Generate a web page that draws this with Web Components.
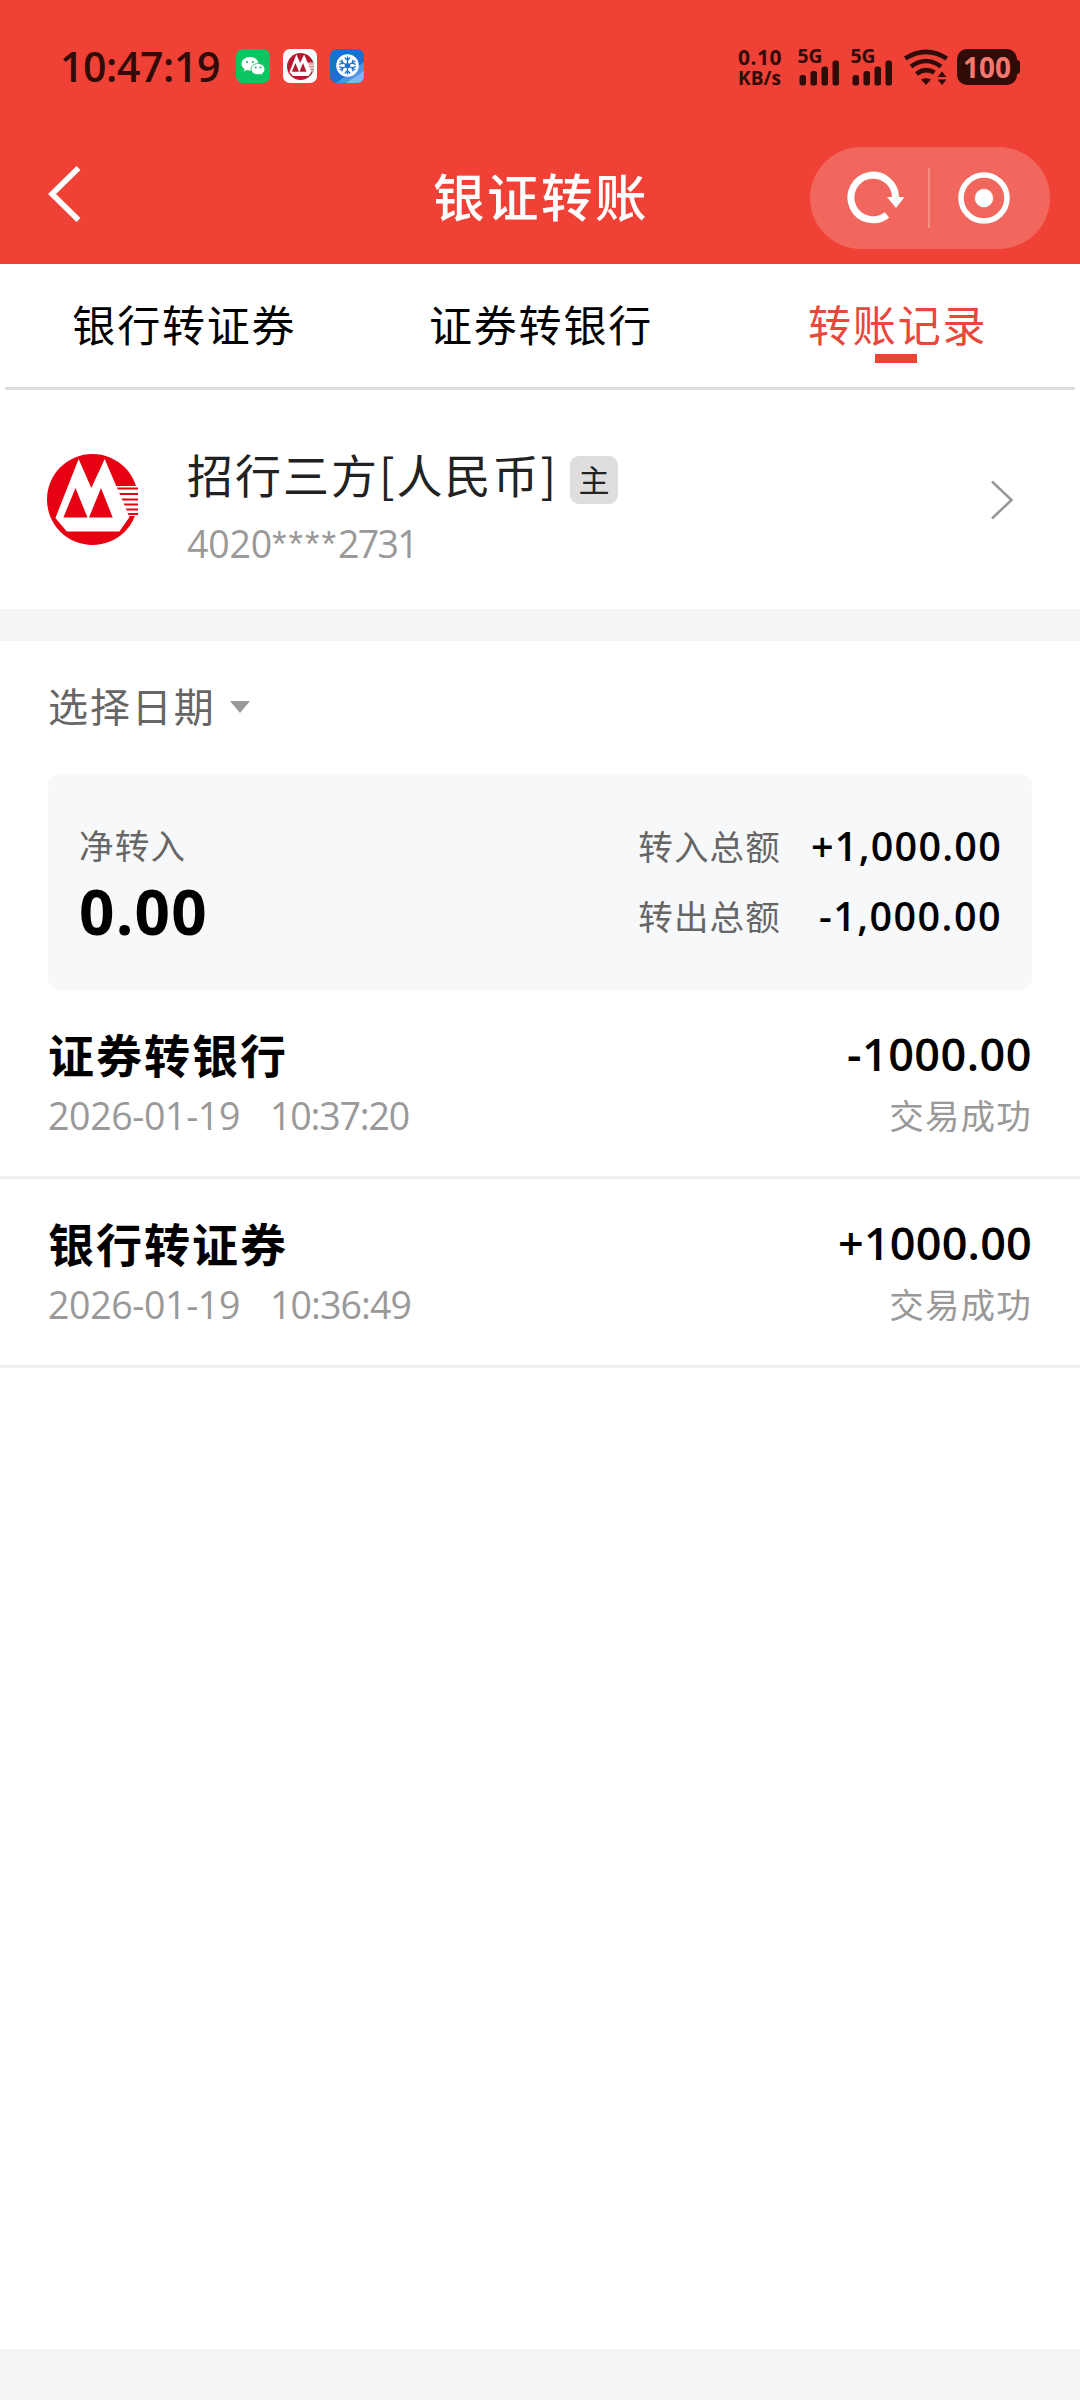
<!doctype html>
<html lang="zh-CN">
  <head>
    <meta charset="UTF-8" />
    <meta name="viewport" content="width=device-width, initial-scale=1.0" />
    <title>银证转账</title>
    <style>
      body {
        margin: 0;
        background: #fff;
        --num: "Open Sans", "Noto Sans", "Noto Sans CJK SC", sans-serif;
        font-family: "Noto Sans CJK SC", "Noto Sans", sans-serif;
      }
      .mask { font-family: "Liberation Sans", sans-serif; }
    </style>
  </head>
<body>

<transfer-page>
  <status-bar slot="top" time="10:47:19" battery="100"></status-bar>
  <nav-header slot="top">银证转账</nav-header>
  <tab-bar>
    <tab-item>银行转证券</tab-item>
    <tab-item>证券转银行</tab-item>
    <tab-item active>转账记录</tab-item>
  </tab-bar>
  <account-card badge="主">
    招行三方[人民币]
    <fit-text slot="number" width="85">4020</fit-text><fit-text slot="number" class="mask" width="66">****</fit-text><fit-text slot="number" width="79">2731</fit-text>
  </account-card>
  <date-filter>选择日期</date-filter>
  <summary-card net="0.00" in="+1,000.00" out="-1,000.00"></summary-card>
  <record-row date="2026-01-19" time="10:37:20" amount="-1000.00" amount-width="185" time-width="139" status="交易成功">证券转银行</record-row>
  <record-row date="2026-01-19" time="10:36:49" amount="+1000.00" amount-width="194" time-width="141" status="交易成功">银行转证券</record-row>
</transfer-page>

<script>

  function define(name, html, setup) {
    customElements.define(name, class extends HTMLElement {
      constructor() {
        super();
        this.attachShadow({ mode: 'open' });
      }
      connectedCallback() {
        this.shadowRoot.innerHTML = typeof html === 'function' ? html(this) : html;
        if (setup) setup(this);
      }
    });
  }

  // one line of text, spaced out or in so that it takes the given width
  define('fit-text', `
    <style>
      :host { display: inline-block; white-space: nowrap; }
    </style>
    <span><slot></slot></span>
  `, (el) => {
    const span = el.shadowRoot.querySelector('span');
    const natural = span.getBoundingClientRect().width;
    const wanted = Number(el.getAttribute('width'));
    const step = (wanted - natural) / el.textContent.length;
    span.style.letterSpacing = step.toFixed(3) + 'px';
  });

  define('transfer-page', `
    <style>
      :host { display: flex; flex-direction: column; width: 1080px; height: 2400px; background: #fff; }
      .top { background: #ef4135; height: 264px; display: flex; flex-direction: column; flex: none; }
      main { flex: 1; }
      footer { height: 51px; background: #f3f5f7; }
    </style>
    <div class="top"><slot name="top"></slot></div>
    <main><slot></slot></main>
    <footer></footer>
  `);

  // bank emblem, --emblem sets the red
  define('bank-logo', `
    <style>
      :host { display: block; color: var(--emblem, #e60012); }
      svg { display: block; width: 100%; height: 100%; }
    </style>
    <svg viewBox="0 0 91 91">
      <circle cx="45.5" cy="45.5" r="45.5" fill="currentColor"/>
      <path d="M68 32H92V62H82Z" fill="#fff"/>
      <path d="M70 34.5H91M72 40H91M74 45.5H91M76 50.5H91M78 55.5H91M80 60H91" stroke="currentColor" stroke-width="1.8"/>
      <path d="M31.6 5 8.4 64 19.8 77.5H72.4L82.5 63 57.7 5 44.3 34Z" fill="#fff"/>
      <path d="M28.5 34 16.4 63.5H40.5ZM54 34 42 63.5H65.7Z" fill="currentColor"/>
    </svg>
  `);

  define('signal-bars', `
    <style>
      :host { display: block; width: 44px; height: 37px; color: #300b08; }
      svg { display: block; overflow: visible; }
      text { font: 700 19px "Open Sans", "Noto Sans", sans-serif; }
    </style>
    <svg width="44" height="37" viewBox="0 0 44 37" fill="currentColor">
      <text x="-.5" y="13.500" textLength="25" lengthAdjust="spacingAndGlyphs">5G</text>
      <rect x="1.5" y="26" width="6.5" height="10.5" rx="2.5"/>
      <rect x="12.5" y="22" width="6.5" height="14.5" rx="2.5"/>
      <rect x="23.5" y="17.500" width="6.5" height="19" rx="2.5"/>
      <rect x="34.5" y="11.500" width="6.5" height="25" rx="2.5"/>
    </svg>
  `);

  define('status-bar', (el) => `
    <style>
      :host { display: flex; align-items: flex-start; height: 85px; padding: 49px 60px 0 60px; box-sizing: border-box; color: #300b08; font-family: var(--num); }
      .time { font-size: 41px; font-weight: 600; line-height: 34px; width: 176px; }
      .apps { display: flex; gap: 13px; flex: 1; }
      .apps svg, .app { display: block; width: 34px; height: 34px; }
      .app { background: #fff; border-radius: 7px; box-sizing: border-box; padding: 3.5px; --emblem: #b8182f; }
      .speed { display: flex; flex-direction: column; width: 60px; font-weight: 700; }
      .speed fit-text { font-size: 21px; line-height: 17px; height: 19px; }
      .speed fit-text + fit-text { font-size: 19px; line-height: 20px; }
      .sig { margin-right: 9px; }
      .wifi { display: block; margin-right: 9px; }
      .battery { display: flex; align-items: center; }
      .cell { width: 60px; height: 36px; border-radius: 10px; background: #300b08; color: #f4786e; font-size: 28px; font-weight: 700; line-height: 36px; text-align: center; }
      .nub { width: 3px; height: 14px; border-radius: 0 3px 3px 0; background: #300b08; }
    </style>
    <div class="time"><fit-text width="160">${el.getAttribute('time')}</fit-text></div>
    <div class="apps">
      <svg viewBox="0 0 34 34">
        <rect width="34" height="34" rx="7" fill="#0bc462"/>
        <path d="M14 8c-5 0-8.500 3-8.500 6.800 0 2.200 1.200 4 3 5.200l-.8 2.600 3-1.500c1 .3 2.200.5 3.300.5 5 0 8.500-3 8.500-6.800S19 8 14 8z" fill="#fff"/>
        <path d="M22 14.500c-4.200 0-7 2.500-7 5.600s2.800 5.600 7 5.600c.9 0 1.700-.1 2.500-.4l2.500 1.400-.6-2.300c1.600-1 2.500-2.600 2.500-4.300 0-3.100-2.700-5.600-6.900-5.600z" fill="#fff" stroke="#0bc462" stroke-width=".8"/>
        <g fill="#0bc462"><circle cx="11" cy="13" r="1.100"/><circle cx="17" cy="13" r="1.100"/><circle cx="19.800" cy="18.500" r="1"/><circle cx="24.500" cy="18.500" r="1"/></g>
      </svg>
      <div class="app"><bank-logo></bank-logo></div>
      <svg viewBox="0 0 34 34">
        <rect width="34" height="34" rx="7" fill="#1b6fd0"/>
        <path d="M34 13V27a7 7 0 0 1-7 7H6Z" fill="#4d93e6"/>
        <path d="M34 22V27a7 7 0 0 1-7 7H16Z" fill="#83b5f3"/>
        <circle cx="17.500" cy="16.500" r="11.300" fill="#fff"/>
        <g stroke="#1b6fd0" stroke-width="1.300" stroke-linecap="round" fill="none">
          <path d="M17.500 8V25M10.100 12.200l14.800 8.600M24.900 12.200l-14.800 8.600"/>
          <path d="M15.200 9l2.300 2.300L19.800 9M15.200 24l2.300-2.300 2.300 2.300M9.600 15.100l3.200-.8-.8-3.200M25.400 17.900l-3.200.8.8 3.200M25.400 15.100l-3.200-.8.8-3.200M9.600 17.900l3.200.8-.8 3.200"/>
        </g>
        <circle cx="17.500" cy="16.500" r="2.600" fill="#1b6fd0"/>
      </svg>
    </div>
    <div class="speed"><fit-text width="44">0.10</fit-text><fit-text width="43">KB/s</fit-text></div>
    <signal-bars class="sig"></signal-bars>
    <signal-bars class="sig"></signal-bars>
    <svg class="wifi" width="44" height="37" viewBox="0 0 44 37" fill="none" stroke="currentColor" stroke-width="4.600">
      <path d="M1.200 9.500Q22-3.800 42.800 9.500M7 17.500Q22 6.500 37 17.500M12.500 25Q21 18 30.500 23.500"/>
      <path d="M17 30.500Q22 28.200 27 30.500L22 36ZM38 22.500l4.500 5.500h-9ZM38 36l4.500-5.500h-9Z" fill="currentColor" stroke="none"/>
    </svg>
    <div class="battery"><div class="cell"><fit-text width="48">${el.getAttribute('battery')}</fit-text></div><div class="nub"></div></div>
  `);

  define('nav-header', `
    <style>
      :host { display: grid; grid-template-columns: 1fr auto 1fr; align-items: center; height: 102px; margin-top: 62px; padding: 0 30px 0 46px; color: #fff; }
      .back { display: block; margin: -8px 0 0 1px; }
      .title { font-size: 51.500px; font-weight: 500; letter-spacing: 2.500px; line-height: 60px; margin: -7px 14px 0 0; }
      .capsule { justify-self: end; display: flex; align-items: center; justify-content: space-between; width: 240px; height: 102px; border-radius: 51px; background: rgba(255, 255, 255, .2); padding: 0 40px 0 36px; box-sizing: border-box; }
      i { width: 2px; height: 60px; background: rgba(255, 255, 255, .25); margin-left: -4px; }
    </style>
    <svg class="back" width="36" height="58" viewBox="0 0 36 58"><path d="M31.500 3 5 29 31.500 55" fill="none" stroke="#fff" stroke-width="5.600"/></svg>
    <div class="title"><slot></slot></div>
    <div class="capsule">
      <svg width="60" height="54" viewBox="0 0 60 54">
        <path d="M49.500 27A22.300 22.300 0 1 0 41 44" fill="none" stroke="#fff" stroke-width="7"/>
        <path d="M41 26H58.500L50 37Z" fill="#fff"/>
      </svg>
      <i></i>
      <svg width="54" height="54" viewBox="0 0 54 54">
        <circle cx="28" cy="27" r="23" fill="none" stroke="#fff" stroke-width="5.500"/>
        <circle cx="28" cy="27" r="9.200" fill="#fff"/>
      </svg>
    </div>
  `);

  define('tab-bar', `
    <style>
      :host { display: grid; grid-template-columns: repeat(3, 1fr); height: 126px; margin: 0 5px; box-sizing: border-box; border-bottom: 3px solid #dcdddd; }
    </style>
    <slot></slot>
  `);

  define('tab-item', `
    <style>
      :host { display: flex; flex-direction: column; align-items: center; padding-top: 31px; color: #000; font-size: 43px; letter-spacing: 1.800px; line-height: 56px; }
      :host([active]) { color: #e8473b; }
      :host([active])::after { content: ""; width: 42px; height: 9px; margin: 3px 2px 0 0; background: #ef4135; }
      span { padding-left: 2px; }
    </style>
    <span><slot></slot></span>
  `);

  define('account-card', (el) => `
    <style>
      :host { display: flex; align-items: center; height: 219px; box-sizing: border-box; padding: 0 66px 0 47px; }
      bank-logo { width: 91px; height: 91px; margin-right: 49px; }
      .info { flex: 1; }
      .name { display: flex; align-items: center; height: 60px; color: #222; font-size: 46px; letter-spacing: 2px; line-height: 60px; margin-top: 10px; }
      .badge { width: 48px; height: 48px; border-radius: 9px; background: #dedede; color: #222; font-size: 31px; letter-spacing: 0; line-height: 45px; text-align: center; margin: 14px 0 0 12px; }
      .number { display: flex; color: #999; font-family: var(--num); font-size: 37.500px; line-height: 44px; margin-top: 19px; }
    </style>
    <bank-logo></bank-logo>
    <div class="info">
      <div class="name"><slot></slot><div class="badge">${el.getAttribute('badge')}</div></div>
      <div class="number"><slot name="number"></slot></div>
    </div>
    <svg width="24" height="42" viewBox="0 0 24 42"><path d="M2 2.500 21.500 21 2 39.500" fill="none" stroke="#999" stroke-width="2.600"/></svg>
  `, (el) => {
    // the slotted numbers take their font from here, so they are fitted again
    el.querySelectorAll('fit-text').forEach(part => el.append(part));
  });

  define('date-filter', `
    <style>
      :host { display: flex; align-items: center; gap: 14px; height: 165px; padding: 0 0 5px 48px; box-sizing: border-box; border-top: 32px solid #f3f5f7; color: #666; font-size: 40px; letter-spacing: 1.900px; line-height: 50px; }
      i { border: solid transparent; border-width: 12px 10px 0; border-top-color: #999; margin-top: 3px; }
      span { margin-top: -1px; }
    </style>
    <span><slot></slot></span><i></i>
  `);

  define('summary-card', (el) => `
    <style>
      :host { display: flex; justify-content: space-between; height: 216px; margin: 0 48px; padding: 45px 30px 0 31px; box-sizing: border-box; border-radius: 13px; background: #f7f8fa; color: #666; font-size: 34.500px; line-height: 50px; letter-spacing: 1.200px; }
      b { display: block; color: #000; font-family: var(--num); letter-spacing: 0; }
      .net b { font-size: 62px; font-weight: 700; line-height: 70px; margin-top: 7px; }
      .sums { display: grid; grid-template-columns: auto 195px; grid-auto-rows: 50px; column-gap: 26px; row-gap: 20px; margin-top: 1px; }
      .sums b { font-size: 39.500px; font-weight: 600; line-height: 52px; text-align: right; }
    </style>
    <div class="net">净转入<b><fit-text width="129">${el.getAttribute('net')}</fit-text></b></div>
    <div class="sums">
      <span>转入总额</span><b><fit-text width="191">${el.getAttribute('in')}</fit-text></b>
      <span>转出总额</span><b><fit-text width="183">${el.getAttribute('out')}</fit-text></b>
    </div>
  `);

  define('record-row', (el) => `
    <style>
      :host { display: flex; justify-content: space-between; height: 189px; padding: 33px 48px 0 48px; box-sizing: border-box; border-bottom: 3px solid #eee; }
      .left, .right { display: flex; flex-direction: column; }
      .right { align-items: flex-end; }
      .title { color: #000; font-size: 46px; font-weight: 700; letter-spacing: 2px; line-height: 60px; }
      .when { display: flex; gap: 30px; color: #999; font-family: var(--num); font-size: 37.500px; line-height: 50px; margin-top: 8px; }
      .amount { height: 60px; color: #000; font-family: var(--num); font-size: 45px; font-weight: 600; line-height: 62px; }
      .status { color: #999; font-size: 34.500px; letter-spacing: 1.200px; line-height: 50px; margin-top: 6px; }
    </style>
    <div class="left">
      <div class="title"><slot></slot></div>
      <div class="when">
        <fit-text width="192">${el.getAttribute('date')}</fit-text>
        <fit-text width="${el.getAttribute('time-width')}">${el.getAttribute('time')}</fit-text>
      </div>
    </div>
    <div class="right">
      <div class="amount"><fit-text width="${el.getAttribute('amount-width')}">${el.getAttribute('amount')}</fit-text></div>
      <div class="status">${el.getAttribute('status')}</div>
    </div>
  `);

</script>

</body>
</html>
